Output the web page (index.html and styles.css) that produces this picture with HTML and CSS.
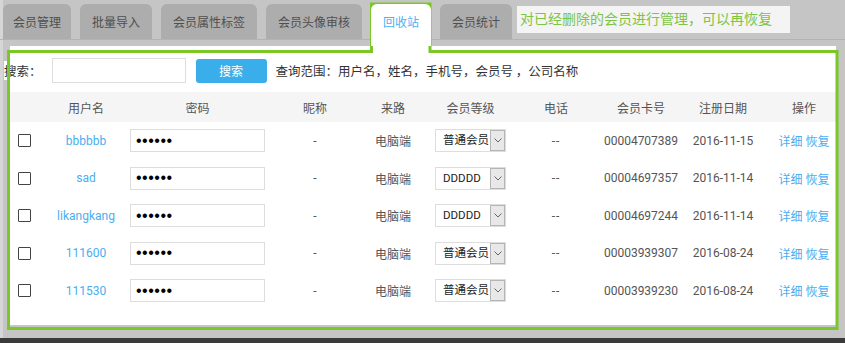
FILE: index.html
```html
<!DOCTYPE html>
<html lang="zh-CN">
<head>
    <meta charset="UTF-8">
    <meta name="viewport" content="width=device-width, initial-scale=1.0">
    <title>会员管理 - 回收站</title>
    <link rel="stylesheet" href="styles.css">
</head>
<body>
    <div class="page">
        <div class="tabs">
            <div class="tab tab-first">会员管理</div>
            <div class="tab">批量导入</div>
            <div class="tab">会员属性标签</div>
            <div class="tab">会员头像审核</div>
            <div class="tab tab-active">回收站</div>
            <div class="tab">会员统计</div>
            <div class="note">对已经删除的会员进行管理，可以再恢复</div>
        </div>

        <div class="panel">
            <div class="search">
                <span class="search-label">搜索：</span>
                <input class="search-input" type="text">
                <button class="search-btn" type="button">搜索</button>
                <span class="search-hint">查询范围：用户名，姓名，手机号，会员号 ，公司名称</span>
            </div>

            <table class="members">
                <colgroup>
                    <col class="c-check"><col class="c-user"><col class="c-pwd"><col class="c-nick"><col class="c-src">
                    <col class="c-level"><col class="c-phone"><col class="c-card"><col class="c-date"><col class="c-op">
                </colgroup>
                <thead>
                    <tr>
                        <th></th>
                        <th>用户名</th>
                        <th>密码</th>
                        <th>昵称</th>
                        <th>来路</th>
                        <th>会员等级</th>
                        <th>电话</th>
                        <th>会员卡号</th>
                        <th>注册日期</th>
                        <th class="op">操作</th>
                    </tr>
                </thead>
                <tbody>
                    <tr>
                        <td class="cb"><input class="check" type="checkbox"></td>
                        <td><a class="link" href="#">bbbbbb</a></td>
                        <td><input class="pwd" type="password" value="123456"></td>
                        <td>-</td>
                        <td>电脑端</td>
                        <td><div class="level"><span>普通会员</span><span class="arrow"><svg width="8" height="5" viewBox="0 0 8 5"><path d="M0.5 0.5 L4 4 L7.5 0.5" fill="none" stroke="#666" stroke-width="1"/></svg></span></div></td>
                        <td class="dash">--</td>
                        <td>00004707389</td>
                        <td>2016-11-15</td>
                        <td class="op"><a class="link" href="#">详细</a> <a class="link" href="#">恢复</a></td>
                    </tr>
                    <tr>
                        <td class="cb"><input class="check" type="checkbox"></td>
                        <td><a class="link" href="#">sad</a></td>
                        <td><input class="pwd" type="password" value="123456"></td>
                        <td>-</td>
                        <td>电脑端</td>
                        <td><div class="level"><span>DDDDD</span><span class="arrow"><svg width="8" height="5" viewBox="0 0 8 5"><path d="M0.5 0.5 L4 4 L7.5 0.5" fill="none" stroke="#666" stroke-width="1"/></svg></span></div></td>
                        <td class="dash">--</td>
                        <td>00004697357</td>
                        <td>2016-11-14</td>
                        <td class="op"><a class="link" href="#">详细</a> <a class="link" href="#">恢复</a></td>
                    </tr>
                    <tr>
                        <td class="cb"><input class="check" type="checkbox"></td>
                        <td><a class="link" href="#">likangkang</a></td>
                        <td><input class="pwd" type="password" value="123456"></td>
                        <td>-</td>
                        <td>电脑端</td>
                        <td><div class="level"><span>DDDDD</span><span class="arrow"><svg width="8" height="5" viewBox="0 0 8 5"><path d="M0.5 0.5 L4 4 L7.5 0.5" fill="none" stroke="#666" stroke-width="1"/></svg></span></div></td>
                        <td class="dash">--</td>
                        <td>00004697244</td>
                        <td>2016-11-14</td>
                        <td class="op"><a class="link" href="#">详细</a> <a class="link" href="#">恢复</a></td>
                    </tr>
                    <tr>
                        <td class="cb"><input class="check" type="checkbox"></td>
                        <td><a class="link" href="#">111600</a></td>
                        <td><input class="pwd" type="password" value="123456"></td>
                        <td>-</td>
                        <td>电脑端</td>
                        <td><div class="level"><span>普通会员</span><span class="arrow"><svg width="8" height="5" viewBox="0 0 8 5"><path d="M0.5 0.5 L4 4 L7.5 0.5" fill="none" stroke="#666" stroke-width="1"/></svg></span></div></td>
                        <td class="dash">--</td>
                        <td>00003939307</td>
                        <td>2016-08-24</td>
                        <td class="op"><a class="link" href="#">详细</a> <a class="link" href="#">恢复</a></td>
                    </tr>
                    <tr>
                        <td class="cb"><input class="check" type="checkbox"></td>
                        <td><a class="link" href="#">111530</a></td>
                        <td><input class="pwd" type="password" value="123456"></td>
                        <td>-</td>
                        <td>电脑端</td>
                        <td><div class="level"><span>普通会员</span><span class="arrow"><svg width="8" height="5" viewBox="0 0 8 5"><path d="M0.5 0.5 L4 4 L7.5 0.5" fill="none" stroke="#666" stroke-width="1"/></svg></span></div></td>
                        <td class="dash">--</td>
                        <td>00003939230</td>
                        <td>2016-08-24</td>
                        <td class="op"><a class="link" href="#">详细</a> <a class="link" href="#">恢复</a></td>
                    </tr>
                </tbody>
            </table>
        </div>

        <div class="scrollbar"></div>

        <!-- green highlight drawn over the recycle bin tab and its panel -->
        <svg class="frame" width="845" height="343" viewBox="0 0 845 343">
            <path d="M8.5 51.5 H371.5 V4 H430 V51.5 H837 V328.5 H8.5 Z" fill="none" stroke="#7bc725" stroke-width="3"/>
        </svg>
    </div>
</body>
</html>
```

FILE: styles.css
```css
body {
    margin: 0;
    height: 343px;
    overflow: hidden;
    background: #c5c5c5;
    box-shadow: inset 3px 0 #d6d6d6;
    font-family: Roboto, "Noto Sans CJK SC", sans-serif;
    font-size: 12px;
    color: #555;
}
.page {
    position: relative;
    height: 343px;
}
.tabs {
    display: flex;
    align-items: flex-start;
    gap: 9px;
    height: 35px;
    padding: 4px 0 0 3px;
    border-bottom: 1px solid #b3b3b3;
}
.tab {
    height: 35px;
    line-height: 38px;
    padding: 0 12px;
    background: #adadad;
    color: #4f4f4f;
    border-radius: 6px 6px 0 0;
    white-space: nowrap;
}
.tab-first {
    padding: 0 10px;
}
.tab-active {
    position: relative;
    z-index: 1;
    height: 42px;
    background: #fff;
    color: #4bb2f2;
}
.note {
    margin: 2px 0 0 -4px;
    height: 27px;
    line-height: 27px;
    padding: 0 18px 0 3px;
    background: #f4f4f4;
    color: #7cc444;
    font-size: 14px;
    white-space: nowrap;
}
.panel {
    margin: 6px 9px 0 10px;
    height: 279px;
    box-sizing: border-box;
    padding-top: 12px;
    background: #fff;
}
.search {
    display: flex;
    align-items: center;
    height: 25px;
    font-family: "Noto Sans CJK SC", sans-serif;
    font-size: 12.5px;
    color: #333;
}
.search-label {
    margin-left: -6px;
    background: #fff;
    white-space: nowrap;
}
.search-input {
    width: 134px;
    height: 25px;
    box-sizing: border-box;
    margin: 0 0 0 10px;
    border: 1px solid #ddd;
    outline: none;
}
.search-btn {
    width: 71px;
    height: 24px;
    margin-left: 10px;
    border: none;
    border-radius: 3px;
    background: #3aaeea;
    color: #fff;
    font-family: inherit;
    font-size: 12px;
}
.search-hint {
    margin-left: 9px;
    white-space: nowrap;
}
.members {
    width: 826px;
    margin-top: 9px;
    table-layout: fixed;
    border-collapse: collapse;
}
.c-check { width: 32px; }
.c-user { width: 88px; }
.c-pwd { width: 135px; }
.c-nick { width: 100px; }
.c-src { width: 56px; }
.c-level { width: 99px; }
.c-phone { width: 72px; }
.c-card { width: 98px; }
.c-date { width: 66px; }
.c-op { width: 80px; }
.members th {
    height: 30px;
    padding: 0;
    background: #f5f5f5;
    font-weight: normal;
    color: #555;
}
.members td {
    height: 37.5px;
    padding: 0;
    text-align: center;
    vertical-align: middle;
    white-space: nowrap;
}
.members .cb {
    padding-left: 8px;
}
.members .op {
    padding-left: 16px;
}
.members .dash {
    letter-spacing: 1px;
}
.check {
    appearance: none;
    display: block;
    width: 13px;
    height: 13px;
    margin: 0;
    border: 1px solid #444;
    border-radius: 1px;
    background: #fff;
}
.link {
    color: #49aef0;
    text-decoration: none;
}
.pwd {
    display: block;
    width: 135px;
    height: 23px;
    box-sizing: border-box;
    margin: 0;
    padding: 0 5px;
    border: 1px solid #ddd;
    font-size: 16px;
    letter-spacing: 0.5px;
    color: #000;
    outline: none;
}
.level {
    display: flex;
    align-items: stretch;
    justify-content: space-between;
    width: 71px;
    height: 23px;
    box-sizing: border-box;
    margin: 0 auto;
    padding-left: 7px;
    border: 1px solid #ddd;
    color: #222;
    font-size: 11.5px;
    line-height: 21px;
    text-align: left;
}
.arrow {
    display: flex;
    align-items: center;
    justify-content: center;
    width: 15px;
    box-sizing: border-box;
    border: 1px solid #b5b5b5;
    background: #e8e8e8;
}
.scrollbar {
    height: 5px;
    margin-top: 13px;
    background: #3a3a3a;
}
.frame {
    position: absolute;
    top: 0;
    left: 0;
    pointer-events: none;
}
```
